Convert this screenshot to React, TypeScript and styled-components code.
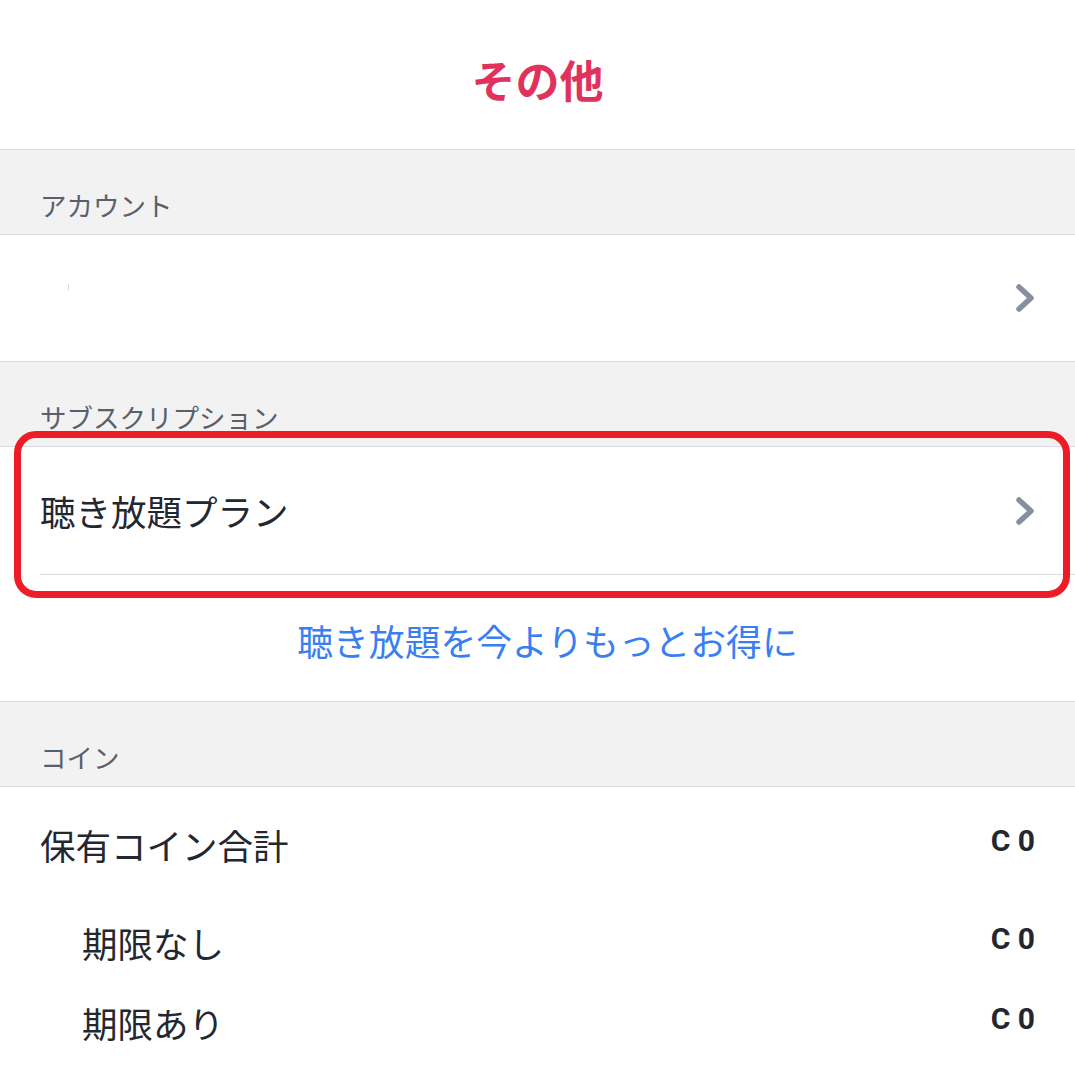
import React from "react";
import styled, { createGlobalStyle } from "styled-components";

const GlobalStyle = createGlobalStyle`
  html, body {
    margin: 0;
    padding: 0;
    background: #ffffff;
  }
  body {
    font-family: "Noto Sans CJK JP", "Noto Sans", sans-serif;
    color: #23272f;
  }
`;

const Page = styled.div`
  width: 1075px;
  display: flex;
  flex-direction: column;
`;

const Header = styled.header`
  height: 150px;
  box-sizing: border-box;
  border-bottom: 1px solid #dadce1;
  display: flex;
  align-items: center;
  justify-content: center;
  padding-top: 10px;
`;

const Title = styled.h1`
  margin: 0;
  font-size: 44px;
  font-weight: 700;
  line-height: 1.2;
  color: #e0325c;
`;

const SectionHeader = styled.div`
  height: 85px;
  box-sizing: border-box;
  background: #f2f2f2;
  border-bottom: 1px solid #dadce1;
  padding: 25px 40px 0;
  display: flex;
  align-items: center;
  font-size: 26.5px;
  line-height: 1.2;
  color: #59606b;
`;

const Row = styled.div<{ $height: number; $indent?: number; $inset?: boolean }>`
  position: relative;
  height: ${(p) => p.$height}px;
  box-sizing: border-box;
  padding: 0 40px 0 ${(p) => p.$indent ?? 40}px;
  display: flex;
  align-items: center;
  justify-content: space-between;
  background: #ffffff;
  ${(p) =>
    p.$inset
      ? `
    &::after {
      content: "";
      position: absolute;
      left: 40px;
      right: 0;
      bottom: 0;
      height: 1px;
      background: #dadce1;
    }
  `
      : `border-bottom: 1px solid #dadce1;`}
`;

const PlainRow = styled.div<{ $height: number; $indent?: number }>`
  height: ${(p) => p.$height}px;
  box-sizing: border-box;
  padding: 0 40px 0 ${(p) => p.$indent ?? 40}px;
  display: flex;
  align-items: center;
  justify-content: space-between;
`;

const Label = styled.span`
  font-size: 35.5px;
  line-height: 1.2;
  color: #23272f;
`;

const Speck = styled.span`
  display: block;
  width: 1px;
  height: 6px;
  margin-left: 28px;
  margin-bottom: 22px;
  background: #d4d6da;
`;

const Value = styled.span`
  font-family: Roboto, "Liberation Sans", sans-serif;
  font-weight: 700;
  font-size: 30px;
  line-height: 1;
  color: #23272f;
  padding-bottom: 8px;
`;

const LinkRow = styled.div`
  height: 127px;
  box-sizing: border-box;
  border-bottom: 1px solid #dadce1;
  padding: 4px 20px 0 40px;
  display: flex;
  align-items: center;
  justify-content: center;
`;

const LinkText = styled.a`
  font-size: 35.8px;
  line-height: 1.2;
  color: #3a7ff2;
  text-decoration: none;
`;

const Highlighted = styled.div`
  position: relative;
`;

const RedFrame = styled.div`
  position: absolute;
  left: 14px;
  right: 5px;
  top: -16px;
  bottom: -23px;
  border: 7.5px solid #ee1c25;
  border-radius: 22px;
  pointer-events: none;
  z-index: 2;
`;

const Chevron = () => (
  <svg width="20" height="31" viewBox="0 0 20 31" aria-hidden="true">
    <polyline
      points="4,4 16,15 4,26"
      fill="none"
      stroke="#858fa0"
      strokeWidth="5.5"
      strokeLinecap="round"
      strokeLinejoin="round"
    />
  </svg>
);

export default function App() {
  return (
    <>
      <GlobalStyle />
      <Page>
        <Header>
          <Title>その他</Title>
        </Header>

        <SectionHeader>アカウント</SectionHeader>
        <Row $height={127}>
          <Speck />
          <Chevron />
        </Row>

        <SectionHeader>サブスクリプション</SectionHeader>
        <Highlighted>
          <Row $height={128} $inset>
            <Label>聴き放題プラン</Label>
            <Chevron />
          </Row>
          <RedFrame />
        </Highlighted>
        <LinkRow>
          <LinkText href="#">聴き放題を今よりもっとお得に</LinkText>
        </LinkRow>

        <SectionHeader>コイン</SectionHeader>
        <PlainRow $height={116}>
          <Label>保有コイン合計</Label>
          <Value>C 0</Value>
        </PlainRow>
        <PlainRow $height={80} $indent={82}>
          <Label>期限なし</Label>
          <Value>C 0</Value>
        </PlainRow>
        <PlainRow $height={80} $indent={82}>
          <Label>期限あり</Label>
          <Value>C 0</Value>
        </PlainRow>
      </Page>
    </>
  );
}
